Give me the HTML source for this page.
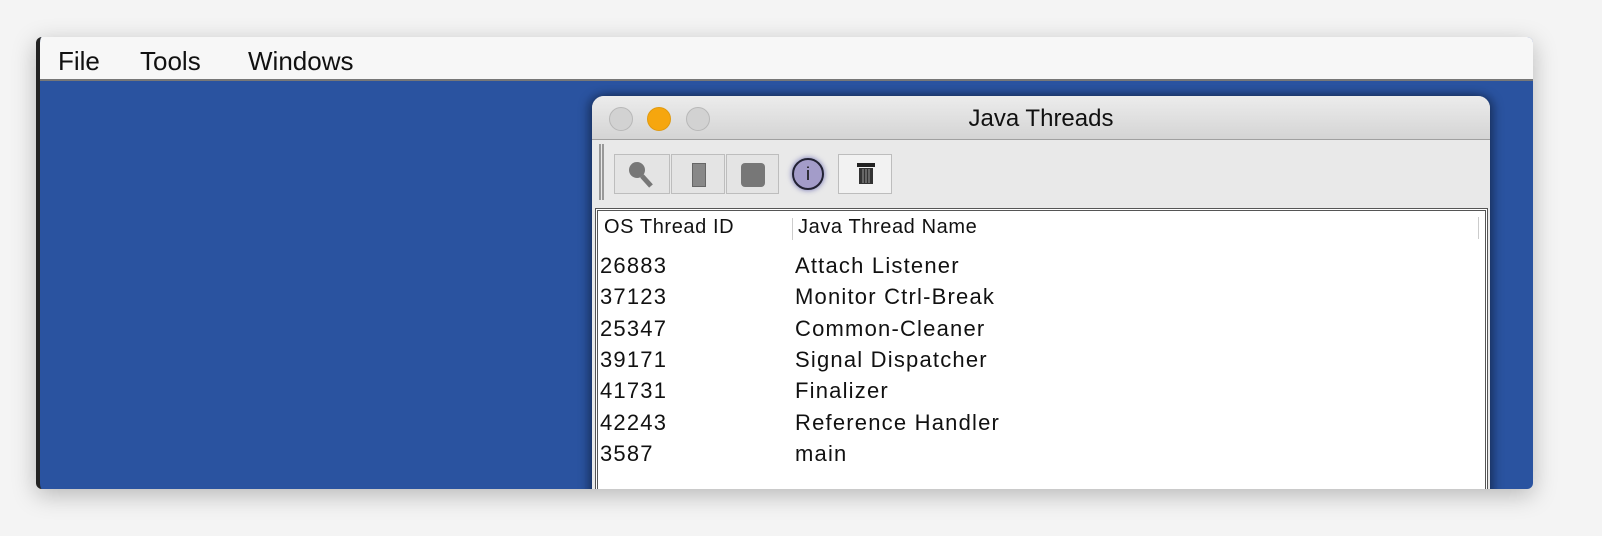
<!DOCTYPE html>
<html><head><style>
*{margin:0;padding:0;box-sizing:border-box}
body{width:1602px;height:536px;background:#f4f4f4;position:relative;overflow:hidden;font-family:"Liberation Sans",sans-serif;color:#111}
#outer{position:absolute;left:36px;top:37px;width:1497px;height:452px;background:#2a53a0;border-radius:6px;overflow:hidden;box-shadow:0 6px 24px rgba(0,0,0,.25);border-left:4px solid #222}
#menu{position:absolute;left:0;top:0;right:0;height:44px;background:#f7f7f7;border-bottom:2px solid #777;font-size:26px}
#menu span{position:absolute;top:9px}
#inner{position:absolute;left:552px;top:59px;width:898px;height:420px;background:#e9e9e9;border-radius:12px 12px 0 0;overflow:hidden;box-shadow:-4px 0 10px rgba(0,0,0,.35),4px 0 10px rgba(0,0,0,.35)}
#title{position:absolute;left:0;top:0;right:0;height:44px;background:linear-gradient(#ececec,#d4d4d4);border-bottom:1px solid #a0a0a0;text-align:center;font-size:24px;line-height:46px}
.dot{position:absolute;top:11px;width:24px;height:24px;border-radius:50%;background:#d2d2d2;border:1px solid #b8b8b8}
#tb{position:absolute;left:0;top:44px;right:0;height:68px;background:#e9e9e9}
.btn{position:absolute;top:14px;height:40px;border:1px solid #bdbdbd;background:#e4e4e4}
#tbl{position:absolute;left:3px;top:112px;right:2px;height:320px;background:#fff;border:3px double #555;border-bottom:none}
.row{position:absolute;left:2px;font-size:22px;letter-spacing:1.2px;white-space:nowrap}
.row b{font-weight:normal;position:absolute;left:195px}
</style></head><body>
<div id="outer">
 <div id="menu"><span style="left:18px">File</span><span style="left:100px">Tools</span><span style="left:208px">Windows</span></div>
 <div id="inner">
  <div id="title">Java Threads
   <div class="dot" style="left:17px"></div>
   <div class="dot" style="left:55px;background:#f6a60e;border-color:#e09a10"></div>
   <div class="dot" style="left:94px"></div>
  </div>
  <div id="tb">
   <div style="position:absolute;left:7px;top:4px;width:5px;height:56px;border-left:2px solid #999;border-right:2px solid #999"></div>
   <div class="btn" style="left:22px;width:56px"><svg width="56" height="40"><circle cx="22" cy="15" r="8" fill="#777"/><path d="M27 21 L36 31" stroke="#777" stroke-width="5"/></svg></div>
   <div class="btn" style="left:79px;width:54px"><div style="position:absolute;left:20px;top:8px;width:14px;height:24px;background:#888;border:1px solid #666"></div></div>
   <div class="btn" style="left:134px;width:53px"><div style="position:absolute;left:14px;top:8px;width:24px;height:24px;background:#777;border-radius:4px"></div></div>
   <div style="position:absolute;left:200px;top:18px;width:32px;height:32px;border-radius:50%;background:#a39cc9;border:2px solid #223;box-shadow:0 0 6px #6a6ab0;text-align:center;font-size:18px;line-height:28px">i</div>
   <div class="btn" style="left:246px;width:54px;background:#f2f2f2"><svg width="54" height="40"><rect x="18" y="8" width="18" height="4" fill="#222"/><rect x="20" y="13" width="14" height="16" fill="#333"/><path d="M24 14v14M27 14v14M30 14v14" stroke="#999"/></svg></div>
  </div>
  <div id="tbl">
   <div class="row" style="top:5px;font-size:20px;letter-spacing:0.6px;left:6px">OS Thread ID<span style="position:absolute;left:188px;top:2px;height:22px;border-left:1px solid #ccc"></span><b style="left:194px">Java Thread Name</b></div>
   <div style="position:absolute;right:6px;top:6px;height:22px;border-left:1px solid #ccc"></div>
   <div class="row" style="top:42px">26883<b>Attach Listener</b></div>
   <div class="row" style="top:73px">37123<b>Monitor Ctrl-Break</b></div>
   <div class="row" style="top:105px">25347<b>Common-Cleaner</b></div>
   <div class="row" style="top:136px">39171<b>Signal Dispatcher</b></div>
   <div class="row" style="top:167px">41731<b>Finalizer</b></div>
   <div class="row" style="top:199px">42243<b>Reference Handler</b></div>
   <div class="row" style="top:230px">3587<b>main</b></div>
  </div>
 </div>
</div>
</body></html>
